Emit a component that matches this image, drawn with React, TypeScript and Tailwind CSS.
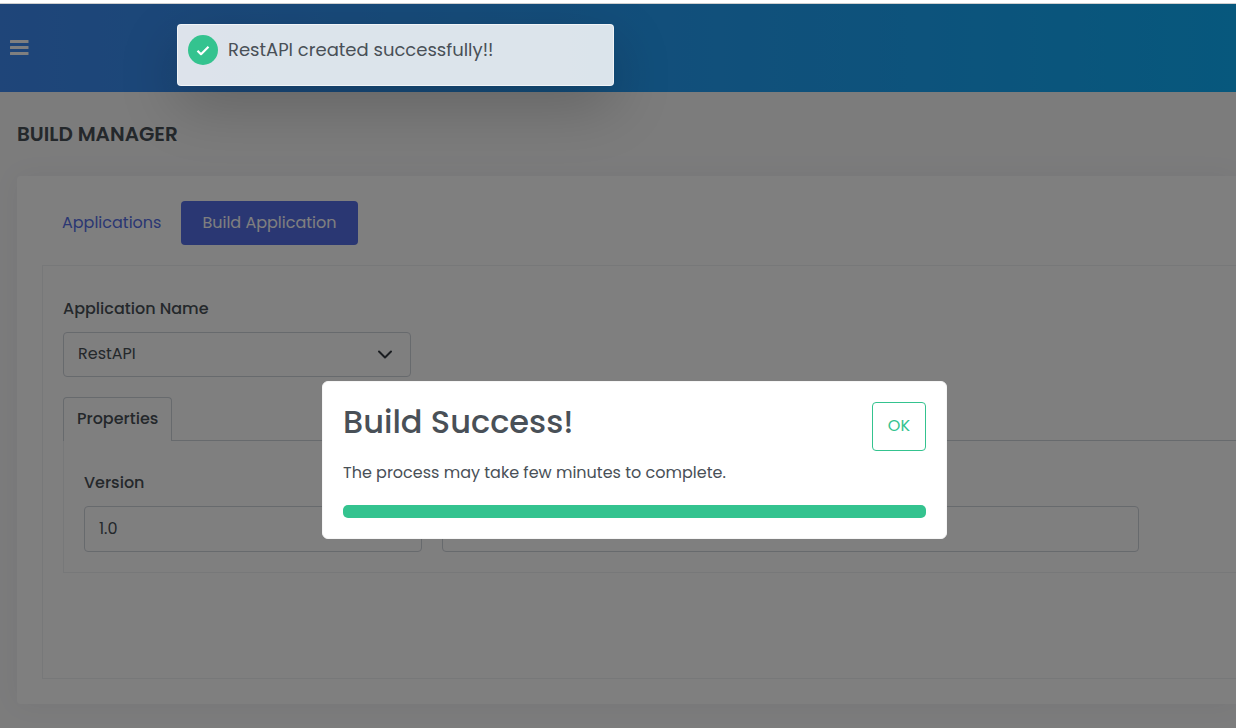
import { useState } from "react";

const fieldClass =
  "h-[46px] w-full rounded border border-[#ced4da] bg-white px-3.5 pb-0.5 text-base text-[#495057] outline-none";
const labelClass = "block text-base leading-6 font-medium text-[#495057]";

function MenuIcon() {
  return (
    <svg viewBox="0 0 19 16" className="h-4 w-[19px]" fill="currentColor" aria-hidden="true">
      <rect x="0" y="0" width="18.5" height="3" rx="0.5" />
      <rect x="0" y="6" width="18.5" height="3" rx="0.5" />
      <rect x="0" y="12" width="18.5" height="3" rx="0.5" />
    </svg>
  );
}

function TopBar() {
  return (
    <header className="flex h-[88px] items-center bg-linear-to-r/srgb from-[#3e8af2] to-[#0eb0fa] px-2.5">
      <button type="button" aria-label="Toggle menu" className="text-white">
        <MenuIcon />
      </button>
    </header>
  );
}

function BuildForm() {
  const [version, setVersion] = useState("1.0");
  const [description, setDescription] = useState("");
  return (
    <section className="mt-5 border border-r-0 border-[#eff0f2] pt-[31px] pb-[105px] pl-5">
      <label htmlFor="app-name" className={labelClass}>
        Application Name
      </label>
      <div className="relative mt-[11px] w-[348px]">
        <select
          id="app-name"
          className="h-[45px] w-full appearance-none rounded border border-[#ced4da] bg-white px-3.5 pb-0.5 text-base text-[#495057] outline-none"
        >
          <option>RestAPI</option>
        </select>
        <svg
          viewBox="0 0 16 16"
          className="pointer-events-none absolute top-[15px] right-[18px] size-4"
          fill="none"
          stroke="#343a40"
          strokeWidth="2"
          strokeLinecap="round"
          strokeLinejoin="round"
          aria-hidden="true"
        >
          <path d="m2 4.5 6 6 6-6" />
        </svg>
      </div>

      <div className="mt-5 flex">
        <button
          type="button"
          className="h-11 rounded-t border border-b-0 border-[#ced4da] px-[13px] pb-0.5 text-base font-medium text-[#495057]"
        >
          Properties
        </button>
        <div className="flex-1 border-b border-[#ced4da]" />
      </div>
      <div className="border-b border-l border-[#eff0f2] pt-[30px] pb-5 pl-5">
        <label htmlFor="version" className={labelClass}>
          Version
        </label>
        <div className="mt-[11px] grid grid-cols-[338fr_697fr_77fr] gap-5">
          <input
            id="version"
            className={fieldClass}
            value={version}
            onChange={(e) => setVersion(e.target.value)}
          />
          <input
            aria-label="Description"
            className={fieldClass}
            value={description}
            onChange={(e) => setDescription(e.target.value)}
          />
        </div>
      </div>
    </section>
  );
}

function Toast() {
  return (
    <div
      role="status"
      className="absolute top-5 left-[177px] flex h-[62px] w-[437px] gap-2.5 rounded border border-white/60 bg-white/85 p-2.5 shadow-[0_20px_60px_rgba(0,0,0,0.2)]"
    >
      <svg viewBox="0 0 30 30" className="size-[30px] shrink-0" aria-hidden="true">
        <circle cx="15" cy="15" r="15" fill="#34c38f" />
        <path
          d="m9.5 15.7 3.5 3.5 7.5-7.4"
          fill="none"
          stroke="white"
          strokeWidth="2.2"
          strokeLinejoin="round"
        />
      </svg>
      <p className="text-lg leading-[30px] text-[#495057]">RestAPI created successfully!!</p>
    </div>
  );
}

function BuildDialog() {
  return (
    <div
      role="dialog"
      aria-labelledby="build-title"
      className="absolute top-[377px] left-[322px] w-[625px] rounded-md border border-[#f6f6f6] bg-white p-5 text-[#495057]"
    >
      <div className="flex items-start justify-between">
        <h2 id="build-title" className="text-[32px] leading-10 font-medium">
          Build Success!
        </h2>
        <button
          type="button"
          className="h-[49px] rounded border border-[#34c38f] px-[15px] pb-0.5 text-base text-[#34c38f]"
        >
          OK
        </button>
      </div>
      <p className="mt-2.5 text-base leading-6">The process may take few minutes to complete.</p>
      <div
        role="progressbar"
        aria-label="Build progress"
        aria-valuenow={100}
        className="mt-5 h-[13px] rounded-[5px] bg-[#34c38f]"
      />
    </div>
  );
}

export default function App() {
  return (
    <div className="flex min-h-screen flex-col overflow-x-hidden font-['Poppins','Inter',sans-serif]">
      <div className="h-1 shrink-0 border-b border-[#cfcfcf] bg-white" />
      <div className="relative flex-1 overflow-hidden bg-[#f8f8f9]">
        <TopBar />
        <main className="pb-6 pl-[17px]">
          <h1 className="pt-[30px] text-xl leading-6 font-semibold text-[#495057]">BUILD MANAGER</h1>
          <div className="mt-[30px] rounded-l bg-white py-[25px] pl-[25px] shadow-[0_0_28px_rgba(18,38,63,0.05)]">
            <nav className="flex text-base">
              <a href="#applications" className="flex h-11 items-center px-5 text-[#556ee6]">
                Applications
              </a>
              <a
                href="#build"
                className="flex h-11 items-center rounded bg-[#556ee6] px-[21px] text-white"
              >
                Build Application
              </a>
            </nav>
            <BuildForm />
          </div>
        </main>
        <div className="absolute inset-0 bg-black/50" />
        <Toast />
        <BuildDialog />
      </div>
    </div>
  );
}
